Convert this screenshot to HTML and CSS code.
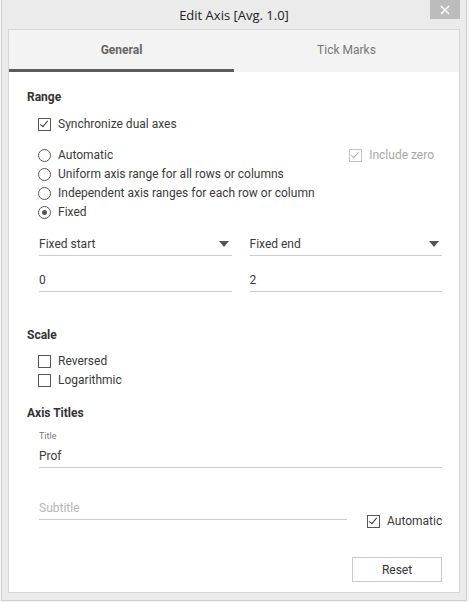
FILE: index.html
```html
<!DOCTYPE html>
<html>
<head>
<meta charset="utf-8">
<link rel="stylesheet" href="styles.css">
</head>
<body>
<div class="window">
  <div class="titlebar">
    <span class="title">Edit Axis [Avg. 1.0]</span>
    <div class="close">
      <svg width="10" height="10" viewBox="0 0 10 10"><path d="M1 1 L9 9 M9 1 L1 9" stroke="#fff" stroke-width="1.6"/></svg>
    </div>
  </div>
  <div class="panel">
    <div class="tabs">
      <div class="tab active">General</div>
      <div class="tab">Tick Marks</div>
    </div>
    <div class="content">
      <div class="heading">Range</div>
      <label class="row sync"><span class="cb checked"></span>Synchronize dual axes</label>

      <div class="radios">
        <div class="row between">
          <label class="opt"><span class="rb"></span>Automatic</label>
          <label class="opt disabled incl"><span class="cb checked"></span>Include zero</label>
        </div>
        <label class="row"><span class="rb"></span>Uniform axis range for all rows or columns</label>
        <label class="row"><span class="rb"></span>Independent axis ranges for each row or column</label>
        <label class="row"><span class="rb on"></span>Fixed</label>
      </div>

      <div class="pair drops">
        <div class="field drop"><span>Fixed start</span><span class="arrow"></span></div>
        <div class="field drop"><span>Fixed end</span><span class="arrow"></span></div>
      </div>
      <div class="pair vals">
        <div class="field">0</div>
        <div class="field">2</div>
      </div>

      <div class="heading scale">Scale</div>
      <div class="checks">
        <label class="row"><span class="cb"></span>Reversed</label>
        <label class="row"><span class="cb"></span>Logarithmic</label>
      </div>

      <div class="heading axt">Axis Titles</div>
      <div class="small">Title</div>
      <div class="field full">Prof</div>

      <div class="subrow">
        <div class="field sub placeholder">Subtitle</div>
        <label class="row auto"><span class="cb checked"></span>Automatic</label>
      </div>

      <div class="actions">
        <button class="btn">Reset</button>
      </div>
    </div>
  </div>
</div>
</body>
</html>
```

FILE: styles.css
```css
html, body {
  margin: 0;
  padding: 0;
}
body {
  background: #f6f6f6;
  width: 469px;
  height: 602px;
  overflow: hidden;
  font-family: Roboto, "Liberation Sans", Arial, sans-serif;
}
.window {
  margin-left: 1px;
  background: #ebebeb;
  border-left: 1px solid #cfcfcf;
  border-right: 1px solid #cfcfcf;
  border-bottom: 1px solid #cfcfcf;
  display: flex;
  flex-direction: column;
  padding: 0 6px 7px 6px;
  box-sizing: border-box;
  width: 466px;
  height: 601px;
}
.titlebar {
  position: relative;
  height: 29px;
  display: flex;
  align-items: center;
  justify-content: center;
  flex: none;
}
.title {
  font-family: "Open Sans", "Noto Sans", sans-serif;
  font-size: 13px;
  color: #222;
  margin-top: 1px;
}
.close {
  position: absolute;
  right: 0;
  top: 0;
  width: 30px;
  height: 19px;
  background: #bcbcbc;
  display: flex;
  align-items: center;
  justify-content: center;
}
.panel {
  flex: 1;
  background: #fff;
  border: 1px solid #d6d6d6;
  display: flex;
  flex-direction: column;
}
.tabs {
  display: flex;
  height: 42px;
  background: #f3f3f3;
  flex: none;
}
.tab {
  flex: 1;
  display: flex;
  align-items: center;
  justify-content: center;
  font-size: 12px;
  color: #777;
  padding-bottom: 3px;
  box-sizing: border-box;
}
.tab.active {
  font-weight: bold;
  color: #666;
  border-bottom: 3px solid #5c5c5c;
  padding-bottom: 0;
}
.content {
  padding: 17px 17px 0 18px;
  font-size: 12px;
  color: #3a3a3a;
}
.heading {
  font-weight: bold;
  line-height: 16px;
  color: #333;
}
.row, .opt {
  display: flex;
  align-items: center;
  height: 19px;
  line-height: 19px;
  margin-left: 11px;
}
.opt { margin-left: 0; }
.between {
  justify-content: space-between;
  padding-right: 8px;
}
.sync { margin-top: 10px; }
.radios { margin-top: 12px; }
.cb {
  width: 11px;
  height: 11px;
  border: 1px solid #555;
  margin-right: 7px;
  position: relative;
  flex: none;
  box-sizing: content-box;
}
.cb.checked::after {
  content: "";
  position: absolute;
  left: 3px;
  top: 0px;
  width: 3px;
  height: 7px;
  border-right: 1.2px solid #333;
  border-bottom: 1.2px solid #333;
  transform: rotate(40deg);
}
.disabled { color: #a8a8a8; }
.disabled .cb { border-color: #c2c2c2; }
.disabled .cb.checked::after { border-color: #b0b0b0; }
.rb {
  width: 11px;
  height: 11px;
  border: 1px solid #555;
  border-radius: 50%;
  margin-right: 7px;
  position: relative;
  flex: none;
}
.rb.on::after {
  content: "";
  position: absolute;
  left: 3px;
  top: 3px;
  width: 5px;
  height: 5px;
  border-radius: 50%;
  background: #555;
}
.pair {
  display: flex;
  gap: 18px;
  margin-left: 12px;
}
.pair .field { flex: 1; }
.drops { margin-top: 11px; }
.vals { margin-top: 13px; }
.field {
  height: 22px;
  line-height: 22px;
  border-bottom: 1px solid #cdcdcd;
  color: #3a3a3a;
}
.drop {
  display: flex;
  justify-content: space-between;
  align-items: center;
}
.arrow {
  width: 0;
  height: 0;
  border-left: 5px solid transparent;
  border-right: 5px solid transparent;
  border-top: 6px solid #555;
  margin-right: 3px;
}
.scale { margin-top: 35px; }
.checks { margin-top: 9px; }
.axt { margin-top: 15px; }
.small {
  font-size: 9px;
  line-height: 12px;
  color: #777;
  margin-top: 9px;
  margin-left: 12px;
}
.full {
  margin-left: 12px;
  margin-top: 3px;
}
.subrow {
  display: flex;
  align-items: flex-start;
  margin-top: 29px;
  margin-left: 12px;
}
.sub { width: 308px; flex: none; }
.placeholder { color: #b4b4b4; }
.auto {
  margin-top: 15px;
  margin-left: 20px;
}
.actions {
  display: flex;
  justify-content: flex-end;
  margin-top: 26px;
}
.btn {
  width: 90px;
  height: 25px;
  background: #fff;
  border: 1px solid #cacaca;
  font-family: Roboto, "Liberation Sans", Arial, sans-serif;
  font-size: 12px;
  color: #333;
  padding: 0;
}
```
